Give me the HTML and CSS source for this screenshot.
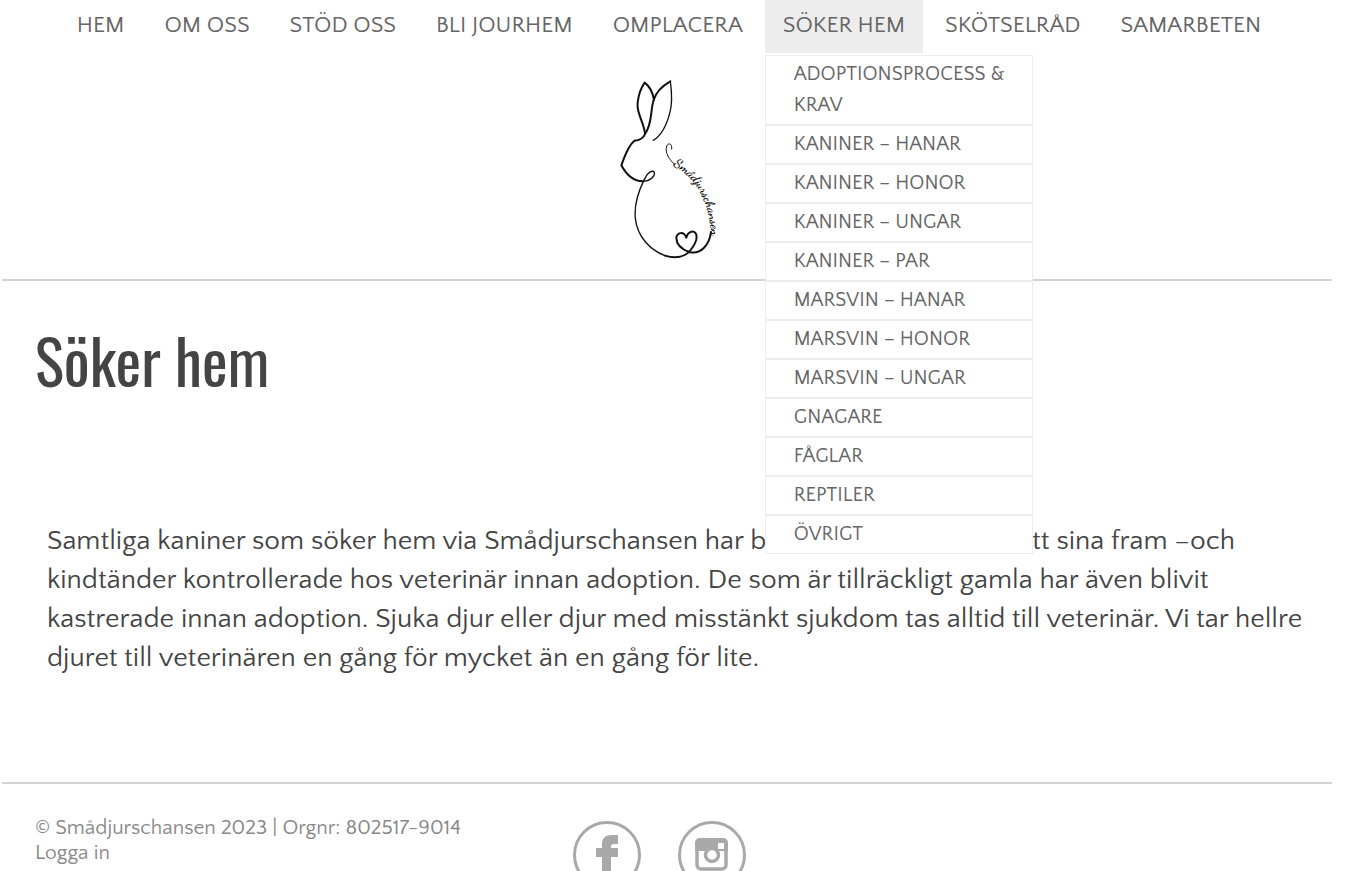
FILE: index.html
```html
<!DOCTYPE html>
<html lang="sv">
<head>
    <meta charset="UTF-8">
    <meta name="viewport" content="width=device-width, initial-scale=1.0">
    <title>Söker hem</title>
    <link rel="stylesheet" href="styles.css">
</head>
<body>
    <div class="page">
        <header class="site-header">
            <nav>
                <ul class="menu">
                    <li><a href="#">HEM</a></li>
                    <li><a href="#">OM OSS</a></li>
                    <li><a href="#">STÖD OSS</a></li>
                    <li><a href="#">BLI JOURHEM</a></li>
                    <li><a href="#">OMPLACERA</a></li>
                    <li class="current">
                        <a href="#">SÖKER HEM</a>
                        <ul class="sub-menu">
                            <li><a href="#">ADOPTIONSPROCESS &amp; KRAV</a></li>
                            <li><a href="#">KANINER – HANAR</a></li>
                            <li><a href="#">KANINER – HONOR</a></li>
                            <li><a href="#">KANINER – UNGAR</a></li>
                            <li><a href="#">KANINER – PAR</a></li>
                            <li><a href="#">MARSVIN – HANAR</a></li>
                            <li><a href="#">MARSVIN – HONOR</a></li>
                            <li><a href="#">MARSVIN – UNGAR</a></li>
                            <li><a href="#">GNAGARE</a></li>
                            <li><a href="#">FÅGLAR</a></li>
                            <li><a href="#">REPTILER</a></li>
                            <li><a href="#">ÖVRIGT</a></li>
                        </ul>
                    </li>
                    <li><a href="#">SKÖTSELRÅD</a></li>
                    <li><a href="#">SAMARBETEN</a></li>
                </ul>
            </nav>

            <a class="logo" href="#">
                <svg viewBox="0 0 402 600" width="134" height="200" role="img" aria-label="Smådjurschansen">
                    <g fill="none" stroke="#111" stroke-linecap="round" stroke-linejoin="round">
                        <!-- Öron -->
                        <path stroke-width="6" d="M135 192C134 160 108 130 113 97C116 73 124 52 134 38C148 48 158 66 162 90"/>
                        <path stroke-width="6" d="M135 192C158 160 150 125 161 90C168 66 190 46 211 34"/>
                        <path stroke-width="4" d="M211 34C216 70 218 100 209 130C200 165 184 196 160 211"/>
                        <!-- Huvud -->
                        <path stroke-width="6" d="M135 192C130 206 118 211 103 212C82 230 74 260 64 286C78 312 100 334 128 334"/>
                        <path stroke-width="4" d="M128 334C150 334 166 318 163 307C158 299 142 307 134 326"/>
                        <!-- Kropp -->
                        <path stroke-width="4" d="M134 326C112 370 102 405 106 445C112 500 150 540 195 557"/>
                        <path stroke-width="6" d="M195 557C225 566 255 562 272 540C286 522 294 503 287 490C279 479 262 487 259 503C252 484 233 486 229 502C228 523 247 538 267 546C305 556 329 520 333 486"/>
                        <path stroke-width="3" d="M215 237C218 222 206 216 200 228C194 248 208 270 224 283"/>
                    </g>
                    <path id="back" fill="none" d="M219 286C276 316 334 380 335 520"/>
                    <text class="logo-text"><textPath href="#back">Smådjurschansen</textPath></text>
                </svg>
            </a>
        </header>

        <main>
            <h1>Söker hem</h1>
            <p>Samtliga kaniner som söker hem via Smådjurschansen har blivit undersökta och fått sina fram –och kindtänder kontrollerade hos veterinär innan adoption. De som är tillräckligt gamla har även blivit kastrerade innan adoption. Sjuka djur eller djur med misstänkt sjukdom tas alltid till veterinär. Vi tar hellre djuret till veterinären en gång för mycket än en gång för lite.</p>
        </main>

        <footer class="site-footer">
            <div>
                © Smådjurschansen 2023 | Orgnr: 802517-9014<br>
                <a href="#">Logga in</a>
            </div>
            <div class="social">
                <a href="#" aria-label="Facebook">
                    <svg viewBox="0 0 68 68" width="68" height="68">
                        <circle cx="34" cy="34" r="32.5" fill="none" stroke="#a9a9a9" stroke-width="3"/>
                        <path fill="#a9a9a9" d="M29 54V36h-6v-9h6v-3c0-7 3-10 10-10h6v9h-4c-2 0-3 1-3 2v2h7v9h-7v18z"/>
                    </svg>
                </a>
                <a href="#" aria-label="Instagram">
                    <svg viewBox="0 0 68 68" width="68" height="68">
                        <circle cx="34" cy="34" r="32.5" fill="none" stroke="#a9a9a9" stroke-width="3"/>
                        <rect x="19" y="19" width="29" height="29" rx="4" fill="none" stroke="#a9a9a9" stroke-width="3.5"/>
                        <path fill="#a9a9a9" d="M17 30V22c0-3 2-5 5-5h23c3 0 5 2 5 5v8z"/>
                        <rect x="40" y="22" width="6" height="6" fill="#fff"/>
                        <circle cx="34" cy="34" r="6.5" fill="#fff" stroke="#a9a9a9" stroke-width="3.5"/>
                    </svg>
                </a>
            </div>
        </footer>
    </div>
</body>
</html>
```
FILE: styles.css
```css
* {
    margin: 0;
    padding: 0;
    box-sizing: border-box;
}

body {
    font-family: "Quattrocento Sans", Lato, sans-serif;
    background: #fff;
    color: #444;
}

a {
    color: inherit;
    text-decoration: none;
}

ul {
    list-style: none;
}

.page {
    margin: 0 34px 0 2px;
}

.site-header {
    border-bottom: 2px solid #d3d3d3;
}

/* Meny */
.menu {
    display: flex;
    justify-content: center;
    gap: 4px;
    padding-left: 4px;
    color: #666;
    font-size: 23px;
    line-height: 51px;
    white-space: nowrap;
}

.menu > li {
    position: relative;
    padding: 0 18px 2px;
}

.menu > .current {
    background: #ededed;
}

.sub-menu {
    position: absolute;
    top: 100%;
    left: 0;
    z-index: 1;
    width: 268px;
    margin-top: 2px;
    background: #fff;
    font-size: 20px;
    line-height: 31px;
    white-space: normal;
}

.sub-menu li {
    padding: 3px 20px 3px 28px;
    border: 1px solid #ededed;
}

.logo {
    display: block;
    width: 134px;
    margin: 17px auto 9px;
}

.logo svg {
    display: block;
}

.logo-text {
    font-family: "Dancing Script", "Liberation Serif", serif;
    font-size: 39px;
    font-weight: 700;
    fill: #111;
}

/* Innehåll */
main {
    padding: 36px 20px 105px 33px;
}

h1 {
    font-family: Oswald, "Roboto Condensed", "Liberation Sans Narrow", sans-serif;
    font-size: 61px;
    font-weight: 400;
    line-height: 86px;
}

main p {
    margin-top: 118px;
    padding-left: 12px;
    font-size: 28px;
    line-height: 39px;
}

/* Sidfot */
.site-footer {
    display: grid;
    grid-template-columns: 2fr 3fr;
    padding: 31px 33px;
    border-top: 2px solid #d3d3d3;
    color: #888;
    font-size: 21px;
    line-height: 25px;
}

.social {
    display: flex;
    gap: 37px;
    padding: 6px 32px;
}
```
